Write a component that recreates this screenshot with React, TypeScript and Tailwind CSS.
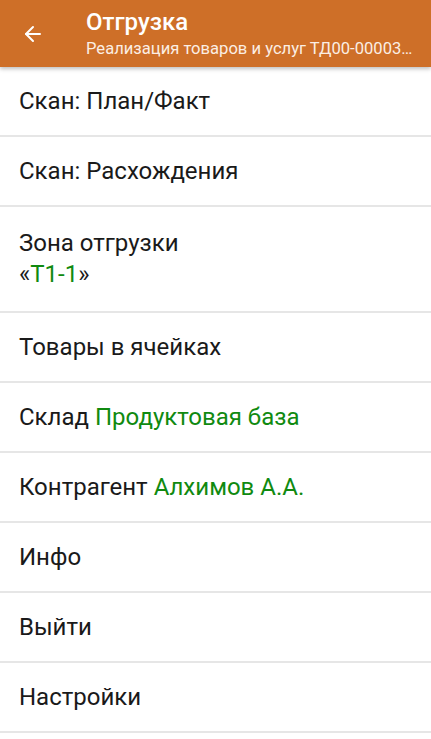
import { ArrowLeft } from "lucide-react";

type Row = {
  label: string;
  value?: string;
  tall?: boolean;
};

const rows: Row[] = [
  { label: "Скан: План/Факт" },
  { label: "Скан: Расхождения" },
  { label: "Зона отгрузки", value: "Т1-1", tall: true },
  { label: "Товары в ячейках" },
  { label: "Склад", value: "Продуктовая база" },
  { label: "Контрагент", value: "Алхимов А.А." },
  { label: "Инфо" },
  { label: "Выйти" },
  { label: "Настройки" },
];

function MenuRow({ row }: { row: Row }) {
  if (row.tall) {
    return (
      <div className="flex h-[106px] flex-col justify-center border-b-2 border-[#e6e6e6] px-[19px] leading-[31px]">
        <div>{row.label}</div>
        <div>
          «<span className="text-[#108a10]">{row.value}</span>»
        </div>
      </div>
    );
  }
  return (
    <div className="flex h-[70px] items-center border-b-2 border-[#e6e6e6] px-[19px]">
      <span>
        {row.label}
        {row.value && <span className="text-[#108a10]"> {row.value}</span>}
      </span>
    </div>
  );
}

export default function App() {
  return (
    <div className="h-[739px] w-[431px] overflow-hidden bg-white font-['Roboto',sans-serif] text-[24px] text-[#1a1a1a]">
      <header className="relative z-10 flex h-[67px] items-center bg-[#ce6f28] text-white shadow-[0_2px_4px_rgba(0,0,0,0.25)]">
        <div className="flex w-[86px] justify-center pr-[20px]">
          <ArrowLeft size={24} strokeWidth={2} />
        </div>
        <div className="min-w-0 flex-1 pr-[6px]">
          <div className="text-[24px] font-medium leading-[30px]">Отгрузка</div>
          <div className="truncate pt-[1px] text-[16.6px] leading-[22px] text-[#fbeee4]">
            Реализация товаров и услуг ТД00-00003…
          </div>
        </div>
      </header>
      <div>
        {rows.map((row) => (
          <MenuRow key={row.label} row={row} />
        ))}
      </div>
    </div>
  );
}
